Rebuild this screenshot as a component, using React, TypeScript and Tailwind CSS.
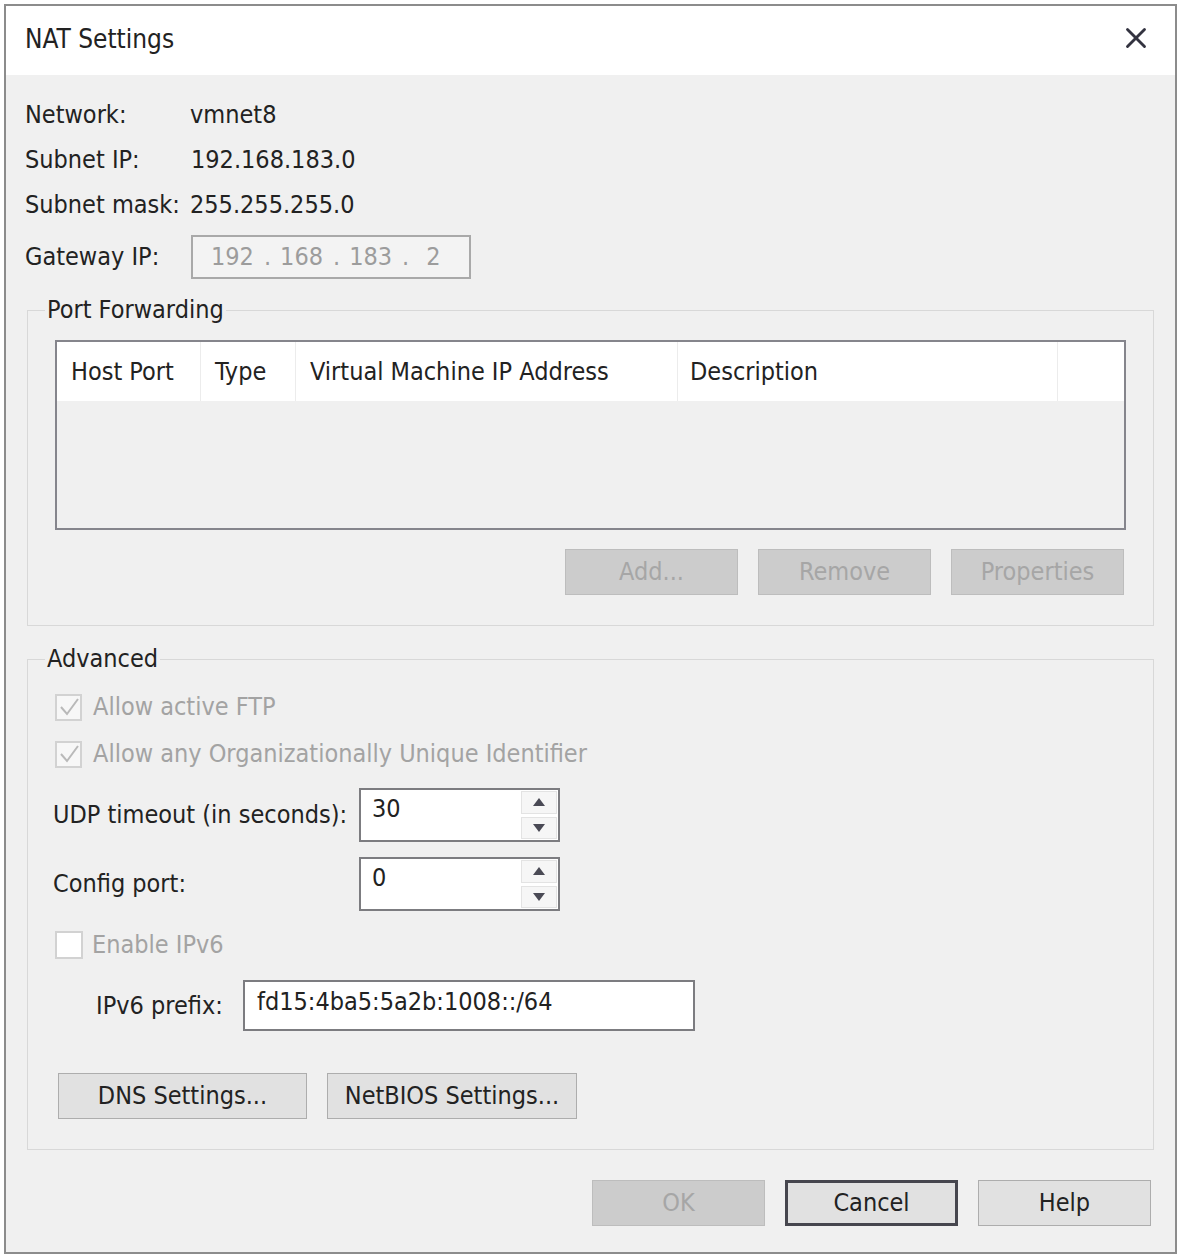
import { X } from "lucide-react";

const Check = ({ checked }: { checked?: boolean }) => (
  <div className="w-[27px] h-[27px] border-2 border-[#d2d2d2] bg-[#f7f7f7] flex items-center justify-center">
    {checked && (
      <svg width="20" height="20" viewBox="0 0 20 20">
        <path d="M2 10 L8 17 L19 2" stroke="#b9b9b9" strokeWidth="2" fill="none" />
      </svg>
    )}
  </div>
);

const Arrow = ({ up }: { up?: boolean }) => (
  <div className="flex-1 border border-[#e3e3e3] bg-[#f6f6f6] flex items-center justify-center">
    <svg width="12" height="8" viewBox="0 0 12 8">
      {up ? <path d="M6 0 L12 8 L0 8 Z" fill="#4a4a55" /> : <path d="M0 0 L12 0 L6 8 Z" fill="#4a4a55" />}
    </svg>
  </div>
);

const Spin = ({ value }: { value: string }) => (
  <div className="w-[201px] h-[54px] border-2 border-[#7c7c80] bg-white flex">
    <div className="flex-1 pl-[11px] pt-[4px] text-[#222]">{value}</div>
    <div className="w-[38px] flex flex-col gap-[3px] p-[1px]">
      <Arrow up />
      <Arrow />
    </div>
  </div>
);

const Btn = ({ label, kind = "normal", w = "w-[173px]" }: { label: string; kind?: "normal" | "off" | "focus"; w?: string }) => {
  const look =
    kind === "off"
      ? "bg-[#cccccc] border border-[#bdbdbd] text-[#a6a6a6]"
      : kind === "focus"
        ? "bg-[#e1e1e1] border-[3px] border-[#46464e] text-[#222]"
        : "bg-[#e1e1e1] border border-[#adadad] text-[#222]";
  return <div className={`${w} h-[46px] flex items-center justify-center ${look}`}>{label}</div>;
};

export default function App() {
  return (
    <div className="w-[1181px] h-[1257px] bg-white p-[4px] font-['DejaVu_Sans_Condensed','DejaVu_Sans',sans-serif] text-[25px] leading-[30px] text-[#222]">
      <div className="w-[1173px] h-[1250px] border-2 border-[#8c8c8c] bg-[#f0f0f0] flex flex-col">
        {/* title bar */}
        <div className="h-[69px] bg-white flex items-center justify-between pl-[19px] pr-[22px]">
          <span className="text-[26px] mt-[-4px]">NAT Settings</span>
          <X size={34} strokeWidth={2} className="text-[#333340] mt-[-6px]" />
        </div>

        <div className="flex-1 px-[21px] pt-[17px] flex flex-col">
          <div className="h-[45px] flex items-center -ml-[2px]">
            <span className="w-[165px]">Network:</span>
            <span>vmnet8</span>
          </div>
          <div className="h-[45px] flex items-center -ml-[2px]">
            <span className="w-[166px]">Subnet IP:</span>
            <span>192.168.183.0</span>
          </div>
          <div className="h-[45px] flex items-center -ml-[2px]">
            <span className="w-[165px]">Subnet mask:</span>
            <span>255.255.255.0</span>
          </div>
          <div className="mt-[8px] h-[44px] flex items-center -ml-[2px]">
            <span className="w-[166px]">Gateway IP:</span>
            <div className="w-[280px] h-[44px] border-2 border-[#a9a9a9] bg-[#f3f3f3] flex items-center pl-[18px] text-[#9c9c9c]">
              <span>192</span>
              <span className="ml-[10px] mr-[9px]">.</span>
              <span>168</span>
              <span className="ml-[10px] mr-[9px]">.</span>
              <span>183</span>
              <span className="ml-[10px] mr-[17px]">.</span>
              <span>2</span>
            </div>
          </div>

          {/* port forwarding */}
          <fieldset className="mt-[16px] border border-[#d8d8d8] px-[27px] pb-[30px]">
            <legend className="-ml-[10px] px-[2px]">Port Forwarding</legend>
            <div className="mt-[15px] h-[190px] border-2 border-[#85858c] bg-[#f0f0f0]">
              <div className="h-[59px] bg-white flex items-center">
                <div className="w-[144px] h-full pl-[14px] flex items-center border-r border-[#ececec]">Host Port</div>
                <div className="w-[95px] h-full pl-[14px] flex items-center border-r border-[#ececec]">Type</div>
                <div className="w-[382px] h-full pl-[14px] flex items-center border-r border-[#ececec]">Virtual Machine IP Address</div>
                <div className="w-[380px] h-full pl-[12px] flex items-center border-r border-[#ececec]">Description</div>
                <div className="flex-1 h-full" />
              </div>
            </div>
            <div className="mt-[19px] flex justify-end gap-[20px] pr-[2px]">
              <Btn label="Add..." kind="off" />
              <Btn label="Remove" kind="off" />
              <Btn label="Properties" kind="off" />
            </div>
          </fieldset>

          {/* advanced */}
          <fieldset className="mt-[18px] border border-[#d8d8d8] px-[27px] pb-[30px]">
            <legend className="-ml-[10px] px-[2px]">Advanced</legend>
            <div className="mt-[13px] h-[40px] flex items-center gap-[11px] text-[#a3a3a3]">
              <Check checked />
              <span>Allow active FTP</span>
            </div>
            <div className="mt-[7px] h-[40px] flex items-center gap-[11px] text-[#a3a3a3]">
              <Check checked />
              <span>Allow any Organizationally Unique Identifier</span>
            </div>
            <div className="mt-[14px] flex items-center">
              <span className="w-[306px] -ml-[2px]">UDP timeout (in seconds):</span>
              <Spin value="30" />
            </div>
            <div className="mt-[15px] flex items-center">
              <span className="w-[306px] -ml-[2px]">Config port:</span>
              <Spin value="0" />
            </div>
            <div className="mt-[14px] h-[40px] flex items-center gap-[9px] text-[#a3a3a3]">
              <div className="w-[28px] h-[28px] border-2 border-[#d2d2d2] bg-white" />
              <span>Enable IPv6</span>
            </div>
            <div className="mt-[15px] flex items-center pl-[41px]">
              <span className="w-[147px]">IPv6 prefix:</span>
              <div className="w-[452px] h-[51px] border-2 border-[#7c7c80] bg-white pl-[12px] pt-[5px]">fd15:4ba5:5a2b:1008::/64</div>
            </div>
            <div className="mt-[42px] flex gap-[20px] pl-[3px]">
              <Btn label="DNS Settings..." w="w-[249px]" />
              <Btn label="NetBIOS Settings..." w="w-[250px]" />
            </div>
          </fieldset>

          <div className="mt-[30px] flex justify-end gap-[20px] pr-[3px]">
            <Btn label="OK" kind="off" />
            <Btn label="Cancel" kind="focus" />
            <Btn label="Help" />
          </div>
        </div>
      </div>
    </div>
  );
}
